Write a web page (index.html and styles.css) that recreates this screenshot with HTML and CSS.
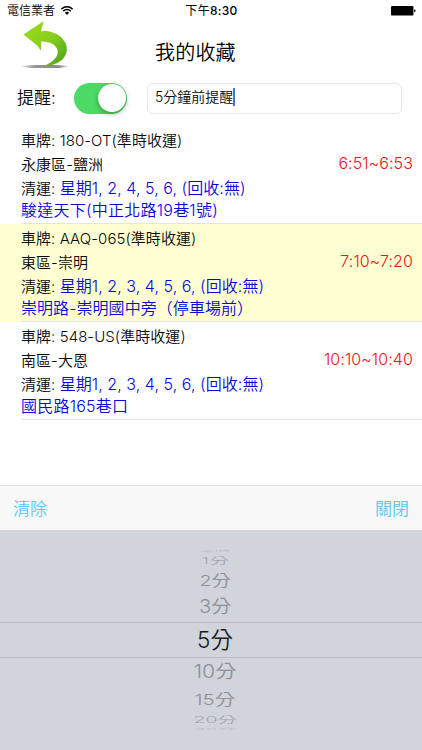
FILE: index.html
```html
<!DOCTYPE html>
<html lang="zh-Hant">
<head>
<meta charset="utf-8">
<title>我的收藏</title>
<link rel="stylesheet" href="styles.css">
</head>
<body>
<main class="screen">
  <div class="statusbar">
    <div class="carrier"><span>電信業者</span>
      <svg class="wifi" viewBox="0 0 12 9" width="12" height="9"><path d="M0.4 3.1a8 8 0 0 1 11.2 0M2.3 5.1a5.3 5.3 0 0 1 7.4 0" fill="none" stroke="#000" stroke-width="1.5"/><path d="M6 8.9 3.9 6.7a3 3 0 0 1 4.2 0z"/></svg>
    </div>
    <span class="clock">下午<b>8:30</b></span>
    <svg class="battery" viewBox="0 0 25 10" width="25" height="10"><rect x="0" y="0" width="22.4" height="9.6" rx="1.2"/><path d="M23.2 3.2q1.4.2 1.4 1.6t-1.4 1.6z"/></svg>
  </div>
  <header class="header">
    <svg class="back" viewBox="0 0 50 50" width="50" height="50">
      <defs>
        <linearGradient id="leaf" x1="0" y1="0" x2="1" y2="1"><stop offset="0" stop-color="#a0dc18"/><stop offset=".55" stop-color="#84cc20"/><stop offset="1" stop-color="#469d20"/></linearGradient>
        <linearGradient id="shade"><stop offset="0" stop-color="#aaa" stop-opacity=".3"/><stop offset=".25" stop-color="#999"/><stop offset=".8" stop-color="#888"/><stop offset="1" stop-color="#aaa" stop-opacity=".3"/></linearGradient>
      </defs>
      <ellipse cx="25" cy="45.5" rx="23.5" ry="1.6" fill="url(#shade)"/>
      <path d="M3.4 13.4 23.7.1 20.9 10.2C35 9 46.8 17.5 46.8 28 46.8 38.6 36.5 44.6 24.3 45 33.5 40.6 38.6 35.5 37.6 29.5 36.7 24 29 20 21.2 20.6L21 29.8 17.2 24.6Z" fill="url(#leaf)"/>
    </svg>
    <h1>我的收藏</h1>
  </header>
  <section class="reminder">
    <label>提醒:</label>
    <span class="switch"><i class="knob"></i></span>
    <div class="field"><span>5分鐘前提醒</span><i class="caret"></i></div>
  </section>
  <ul class="list">
    <li class="item">
      <p class="plate">車牌: 180-OT(準時收運)</p>
      <p class="area"><span>永康區-鹽洲</span><time>6:51~6:53</time></p>
      <p class="days">清運: <b>星期1, 2, 4, 5, 6, (回收:無)</b></p>
      <p class="road wide">駿達天下(中正北路19巷1號)</p>
    </li>
    <li class="item active">
      <p class="plate">車牌: AAQ-065(準時收運)</p>
      <p class="area"><span>東區-崇明</span><time>7:10~7:20</time></p>
      <p class="days">清運: <b>星期1, 2, 3, 4, 5, 6, (回收:無)</b></p>
      <p class="road">崇明路-崇明國中旁（停車場前）</p>
    </li>
    <li class="item">
      <p class="plate">車牌: 548-US(準時收運)</p>
      <p class="area"><span>南區-大恩</span><time>10:10~10:40</time></p>
      <p class="days">清運: <b>星期1, 2, 3, 4, 5, 6, (回收:無)</b></p>
      <p class="road wide">國民路165巷口</p>
    </li>
  </ul>
  <div class="toolbar"><span>清除</span><span>關閉</span></div>
  <div class="picker">
    <div class="opt edge-top"><span>準時</span></div>
    <div class="opt one"><span>1分</span></div>
    <div class="opt two"><span>2分</span></div>
    <div class="opt three"><span>3分</span></div>
    <div class="opt selected"><span>5分</span></div>
    <div class="opt ten"><span>10分</span></div>
    <div class="opt fifteen"><span>15分</span></div>
    <div class="opt twenty"><span>20分</span></div>
    <div class="opt edge-bottom"><span>30分</span></div>
  </div>
</main>
</body>
</html>
```
FILE: styles.css
```css
* { box-sizing: border-box; margin: 0; padding: 0; }
body { width: 422px; height: 750px; overflow: hidden; background: #fff; color: #080808; font-family: Inter, "Noto Sans CJK TC", sans-serif; font-weight: 350; }
.screen { width: 422px; height: 750px; display: flex; flex-direction: column; }
.statusbar { height: 21px; flex: none; display: grid; grid-template-columns: 1fr auto 1fr; align-items: center; padding: 0 6px 0 7px; font-size: 12px; line-height: 20px; color: #000; }
.carrier { display: flex; align-items: center; gap: 6px; }
.clock { font-weight: 400; letter-spacing: .3px; }
.clock b { font-weight: 500; }
.battery { justify-self: end; }
.header { height: 49px; flex: none; display: grid; grid-template-columns: 50px 1fr; padding: 0 20px; }
.header h1 { font-size: 20px; font-weight: 350; line-height: 29px; margin-top: 18px; padding-left: 85px; color: #000; letter-spacing: .2px; }
.reminder { height: 56px; flex: none; display: flex; align-items: center; padding: 0 20px 0 17px; }
.reminder label { width: 57px; font-size: 17px; line-height: 24px; white-space: nowrap; }
.switch { width: 53px; height: 31px; border-radius: 16px; background: #4cd964; display: flex; justify-content: flex-end; padding: 1.5px; margin-right: 20px; }
.knob { width: 28px; height: 28px; border-radius: 50%; background: #fff; box-shadow: 0 2px 5px rgba(0,0,0,.3); }
.field { width: 255px; height: 31px; border: 1px solid #e8e8e8; border-radius: 6px; display: flex; align-items: center; padding: 0 0 2px 7px; font-size: 14px; line-height: 20px; }
.caret { width: 2px; height: 18px; background: #4d70d5; }
.list { list-style: none; height: 359px; flex: none; }
.item { height: 98px; padding: 3px 0 0 21px; background: linear-gradient(#e4e4e2, #e4e4e2) 21px 97px / 401px 1px no-repeat; white-space: nowrap; }
.active { background-color: #ffffd2; }
.item p { font-size: 15px; line-height: 24px; height: 24px; letter-spacing: .06px; }
.item .area { display: flex; justify-content: space-between; padding-right: 9px; }
.area time { font-size: 16px; line-height: 20px; color: #ee1212; letter-spacing: .1px; }
.item .days { line-height: 22px; height: 22px; }
.days b { font-weight: 350; font-size: 16px; color: #0606dc; }
.item .road { font-size: 16px; line-height: 22px; height: 22px; color: #0606dc; }
.item .wide { letter-spacing: .24px; }
.toolbar { height: 45px; flex: none; background: #f8f8f8; border-top: 1px solid #ddd; display: flex; justify-content: space-between; align-items: center; padding: 0 13px 2px; font-size: 17px; color: #5ac8f0; }
.picker { height: 220px; flex: none; background: #d1d5db; padding-top: 18px; overflow: hidden; }
.opt { display: flex; align-items: center; justify-content: center; font-size: 19px; line-height: 24px; color: #8d9096; padding-left: 8px; }
.opt span { display: block; white-space: nowrap; }
.edge-top { height: 5px; color: #b8bcc2; }
.edge-top span { transform: scale(.8, .12); }
.one { height: 16px; color: #a5a8af; }
.one span { transform: scale(1.05, .5); }
.two { height: 23px; }
.two span { transform: scale(1.03, .76); }
.three { height: 30px; }
.three span { transform: scale(1.06, .96); }
.selected { height: 36px; border: solid #b9bbc2; border-width: 1px 0; font-size: 22.5px; color: #1b1c1e; }
.ten { height: 28px; }
.ten span { transform: scale(1.12, .96); }
.fifteen { height: 27px; }
.fifteen span { transform: scale(1.08, .76); }
.twenty { height: 13px; color: #a3a6ac; }
.twenty span { transform: scale(1.03, .48); }
.edge-bottom { height: 6px; color: #b8bcc2; }
.edge-bottom span { transform: scale(.98, .12); }
```
